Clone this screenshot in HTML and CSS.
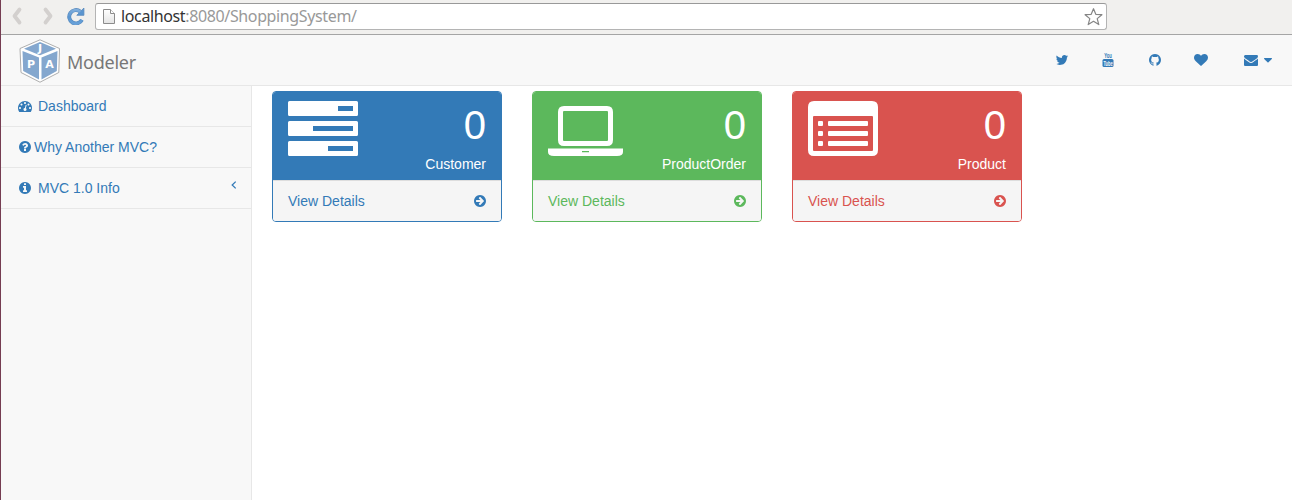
FILE: index.html
```
<!DOCTYPE html>
<html lang="en">
<head>
<meta charset="utf-8">
<title>ShoppingSystem</title>
<link rel="stylesheet" href="styles.css">
</head>
<body>
<svg class="defs" aria-hidden="true">
  <symbol id="arrow" viewBox="0 0 1792 1792"><path fill-rule="evenodd" d="M1664 896q0 209-103 385.500t-279.500 279.500-385.500 103-385.500-103-279.500-279.500-103-385.500 103-385.500 279.500-279.500 385.500-103 385.500 103 279.500 279.500 103 385.500zM1413 896q0-27-18-45l-453-453q-18-18-45-18t-45 18l-91 91q-18 18-18 45t18 45l189 189h-502q-26 0-45 19t-19 45v128q0 26 19 45t45 19h502l-189 189q-18 18-18 45t18 45l91 91q18 18 45 18t45-18l453-453q18-18 18-45z"/></symbol>
</svg>
<div class="window">
  <div class="toolbar">
    <svg class="nav-arrow back" width="14" height="20" viewBox="0 0 14 20"><path d="M9.500 3.500L4.500 10L9.500 16.500" /></svg>
    <svg class="nav-arrow forward" width="14" height="20" viewBox="0 0 14 20"><path d="M4.500 3.500L9.500 10L4.500 16.500"/></svg>
    <svg class="reload" width="18" height="18" viewBox="0 0 18 18">
      <defs><linearGradient id="reload" gradientUnits="userSpaceOnUse" x1="0" y1="0" x2="0" y2="18"><stop offset="0" stop-color="#8db6e0"/><stop offset=".55" stop-color="#5a95d0"/><stop offset="1" stop-color="#6ba3da"/></linearGradient></defs>
      <path d="M13.200 4.600A6.700 6.700 0 1 0 14.900 12.800" fill="none" stroke="#5688bc" stroke-width="3.900"/>
      <path d="M16.900 1V8.300H9.800Z" fill="#5a95d0" stroke="#5688bc" stroke-width=".8" stroke-linejoin="round"/>
      <path d="M13.400 4.800A6.700 6.700 0 1 0 14.900 12.800" fill="none" stroke="url(#reload)" stroke-width="2.800"/>
    </svg>
    <div class="address">
      <svg width="12" height="16" viewBox="0 0 12 16"><defs><linearGradient id="paper" x1="0" y1="0" x2="0" y2="1"><stop offset="0" stop-color="#fff"/><stop offset="1" stop-color="#e4e4e4"/></linearGradient></defs><path d="M.5.5H7.500L11.500 4.500V14.500H.5Z" fill="url(#paper)" stroke="#8c8c8c"/><path d="M7.500.5V4.500H11.500" fill="#fff" stroke="#8c8c8c"/></svg>
      <span class="url"><b>localhost</b>:8080/ShoppingSystem/</span>
      <svg class="star" width="20" height="20" viewBox="0 0 20 20"><path d="M9.500 1.700L11.800 7.300L17.900 7.700L13.200 11.600L14.800 17.600L9.500 14.300L4.200 17.600L5.800 11.600L1.100 7.700L7.200 7.300Z" fill="#fff" stroke="#858585" stroke-width="1.200" stroke-linejoin="round"/></svg>
    </div>
  </div>
  <header class="navbar">
    <a class="brand">
      <svg width="42" height="44" viewBox="0 0 42 44"><path d="M21 .8L40.500 9.500L39.800 33.500L21 43.200L2 33.500L1 9.500Z" fill="#fff" stroke="#999" stroke-width=".8"/><path d="M21 3L37 9.800L21 16.300L5 9.800Z" fill="#84a7ce"/><path d="M3.500 12L20 18.500V40.500L4.200 32Z" fill="#84a7ce"/><path d="M38.500 12L22.500 18.500V40.500L37.800 32Z" fill="#84a7ce"/><g class="cube-text"><text x="21" y="13">J</text><text x="12" y="29">P</text><text x="30.500" y="29">A</text></g></svg>
      <span>Modeler</span>
    </a>
    <nav class="links">
      <a><svg class="fa" viewBox="0 0 1792 1792"><path d="M1684 408q-67 98-162 167 1 14 1 42 0 130-38 259.500t-115.500 248.500-184.500 210.500-258 146-323 54.500q-271 0-496-145 35 4 78 4 225 0 401-138-105-2-188-64.500t-114-159.500q33 5 61 5 43 0 85-11-112-23-185.500-111.500t-73.500-205.500v-4q68 38 146 41-66-44-105-115t-39-154q0-88 44-163 121 149 294.500 238.500t371.500 99.500q-8-38-8-74 0-134 94.500-228.500t228.500-94.500q140 0 236 102 109-21 205-78-37 115-142 178 93-10 186-50z"/></svg></a>
      <a><svg class="fa youtube" viewBox="0 0 14 14"><rect x="1.500" y="6" width="11" height="8" rx="1.500"/><text x="3.200" y="5.200" textLength="7.600" lengthAdjust="spacingAndGlyphs">You</text><text class="tube" x="2.400" y="12.700" textLength="9.200" lengthAdjust="spacingAndGlyphs">Tube</text></svg></a>
      <a><svg class="fa" viewBox="0 0 1792 1792"><path d="M896 128q209 0 385.500 103t279.500 279.500 103 385.500q0 251-146.500 451.500t-378.500 277.500q-27 5-40-7t-13-30q0-3 .5-76.500t.5-134.500q0-97-52-142 57-6 102.500-18t94-39 81-66.500 53-105 20.500-150.500q0-119-79-206 37-91-8-204-28-9-81 11t-92 44l-38 24q-93-26-192-26t-192 26q-16-11-42.500-27t-83.500-38.500-85-13.500q-45 113-8 204-79 87-79 206 0 85 20.500 150t52.500 105 80.500 67 94 39 102.500 18q-39 36-49 103-21 10-45 15t-57 5-65.500-21.500-55.500-62.500q-19-32-48.500-52t-49.500-24l-20-3q-21 0-29 4.500t-5 11.500 9 14 13 12l7 5q22 10 43.500 38t31.500 51l10 23q13 38 44 61.500t67 30 69.500 7 55.500-3.500l23-4q0 38 .5 88.500t.5 54.500q0 18-13 30t-40 7q-232-77-378.500-277.500t-146.500-451.500q0-209 103-385.500t279.500-279.500 385.500-103z"/></svg></a>
      <a><svg class="fa" viewBox="0 0 1792 1792"><path d="M896 1664q-26 0-44-18l-624-602q-10-8-27.500-26t-55.500-65.500-68-97.500-53.500-121-23.500-138q0-220 127-344t351-124q62 0 126.500 21.500t120 58 95.500 68.500 76 68q36-36 76-68t95.500-68.500 120-58 126.500-21.500q224 0 351 124t127 344q0 221-229 450l-623 600q-18 18-44 18z"/></svg></a>
      <a class="mail"><svg class="fa" viewBox="0 0 1792 1792"><path d="M1792 710v794q0 66-47 113t-113 47h-1472q-66 0-113-47t-47-113v-794q44 49 101 87 362 246 497 345 57 42 92.500 65.500t94.500 48 110 24.500h2q51 0 110-24.500t94.500-48 92.500-65.500q170-123 498-345 57-39 100-87zm0-294q0 79-49 151t-122 123q-376 261-468 325-10 7-42.500 31t-54 38.500-52 32.500-57.500 27-50 9h-2q-23 0-50-9t-57.500-27-52-32.500-54-38.500-42.500-31q-91-64-262-182.500t-205-142.500q-62-42-117-115.500t-55-136.500q0-78 41.500-130t118.500-52h1472q65 0 112.500 47t47.500 113z"/></svg><svg width="8" height="5" viewBox="0 0 8 5"><path d="M.5 0H7.500Q8.300.3 7.800 1L4.500 4.300Q4 4.700 3.500 4.300L.2 1Q-.3.3.5 0Z"/></svg></a>
    </nav>
  </header>
  <div class="body">
    <aside class="sidebar">
      <a class="item"><svg class="fa" viewBox="0 0 1792 1792"><path d="M384 1152q0-53-37.500-90.500t-90.500-37.500-90.500 37.500-37.500 90.500 37.500 90.500 90.500 37.500 90.500-37.500 37.500-90.500zm192-448q0-53-37.500-90.500t-90.500-37.500-90.500 37.500-37.500 90.500 37.500 90.500 90.500 37.500 90.500-37.500 37.500-90.500zm428 481l101-382q6-26-7.500-48.500t-38.500-29.500-48 6.500-30 39.500l-101 382q-60 5-107 43.500t-63 98.500q-20 77 20 146t117 89 146-20 89-117q16-60-6-117t-72-91zm660-33q0-53-37.500-90.500t-90.500-37.500-90.500 37.500-37.500 90.500 37.500 90.500 90.500 37.500 90.500-37.500 37.500-90.500zm-640-640q0-53-37.500-90.500t-90.500-37.500-90.500 37.500-37.500 90.500 37.500 90.500 90.500 37.500 90.500-37.500 37.500-90.500zm448 192q0-53-37.500-90.500t-90.500-37.500-90.500 37.500-37.500 90.500 37.500 90.500 90.500 37.500 90.500-37.500 37.500-90.500zm320 448q0 261-141 483-19 29-54 29h-1402q-35 0-54-29-141-221-141-483 0-182 71-348t191-286 286-191 348-71 348 71 286 191 191 286 71 348z"/></svg><span>Dashboard</span></a>
      <a class="item tight"><svg class="fa" viewBox="0 0 1792 1792"><path d="M1024 1376v-192q0-14-9-23t-23-9h-192q-14 0-23 9t-9 23v192q0 14 9 23t23 9h192q14 0 23-9t9-23zm256-672q0-88-55.500-163t-138.500-116-170-41q-243 0-371 213-15 24 8 42l132 100q7 6 19 6 16 0 25-12 53-68 86-92 34-24 86-24 48 0 85.500 26t37.500 59q0 38-20 61t-68 45q-63 28-115.500 86.500t-52.500 125.500v36q0 14 9 23t23 9h192q14 0 23-9t9-23q0-19 21.500-49.500t54.500-49.500q32-18 49-28.500t46-35 44.500-48 28-60.500 12.500-81zm384 192q0 209-103 385.500t-279.500 279.500-385.500 103-385.500-103-279.500-279.500-103-385.500 103-385.500 279.500-279.500 385.500-103 385.500 103 279.500 279.500 103 385.500z"/></svg><span>Why Another MVC?</span></a>
      <a class="item"><svg class="fa" viewBox="0 0 1792 1792"><path d="M1152 1376v-160q0-14-9-23t-23-9h-96v-512q0-14-9-23t-23-9h-320q-14 0-23 9t-9 23v160q0 14 9 23t23 9h96v320h-96q-14 0-23 9t-9 23v160q0 14 9 23t23 9h448q14 0 23-9t9-23zm-128-896v-160q0-14-9-23t-23-9h-192q-14 0-23 9t-9 23v160q0 14 9 23t23 9h192q14 0 23-9t9-23zm640 416q0 209-103 385.500t-279.500 279.500-385.500 103-385.500-103-279.500-279.500-103-385.500 103-385.500 279.500-279.500 385.500-103 385.500 103 279.500 279.500 103 385.500z"/></svg><span>MVC 1.0 Info</span><svg class="chevron" width="6" height="8" viewBox="0 0 6 8"><path d="M4.700.6L1.200 4L4.700 7.400"/></svg></a>
    </aside>
    <main class="cards">
      <section class="card blue">
        <div class="head">
          <svg width="75" height="56" viewBox="0 0 75 56"><path fill-rule="evenodd" d="M1.500 0H68.500Q70 0 70 1.500V13.500Q70 15 68.500 15H1.500Q0 15 0 13.500V1.500Q0 0 1.500 0ZM50 5V10H65V5ZM1.500 20H68.500Q70 20 70 21.500V33.500Q70 35 68.500 35H1.500Q0 35 0 33.500V21.500Q0 20 1.500 20ZM25 25V30H65V25ZM1.500 40H68.500Q70 40 70 41.500V53.500Q70 55 68.500 55H1.500Q0 55 0 53.500V41.500Q0 40 1.500 40ZM40 45V50H65V45Z"/></svg>
          <div class="stat"><div class="count">0</div><div>Customer</div></div>
        </div>
        <a class="foot"><span>View Details</span><svg class="fa"><use href="#arrow"/></svg></a>
      </section>
      <section class="card green">
        <div class="head">
          <svg width="75" height="56" viewBox="0 0 75 56"><path fill-rule="evenodd" d="M16 5H59Q65 5 65 11V39Q65 45 59 45H16Q10 45 10 39V11Q10 5 16 5ZM16 10Q15 10 15 11V39Q15 40 16 40H59Q60 40 60 39V11Q60 10 59 10ZM0 47.500H75V51Q75 55 69 55H6Q0 55 0 51ZM34 50V51.200H41V50Z"/></svg>
          <div class="stat"><div class="count">0</div><div>ProductOrder</div></div>
        </div>
        <a class="foot"><span>View Details</span><svg class="fa"><use href="#arrow"/></svg></a>
      </section>
      <section class="card red">
        <div class="head">
          <svg width="75" height="56" viewBox="0 0 75 56"><path fill-rule="evenodd" d="M6 0H64Q70 0 70 6V49Q70 55 64 55H6Q0 55 0 49V6Q0 0 6 0ZM6 15Q5 15 5 16V49Q5 50 6 50H64Q65 50 65 49V16Q65 15 64 15Z"/><g><rect x="10" y="20" width="5" height="5" rx="1"/><rect x="20" y="20" width="40" height="5" rx="1"/><rect x="10" y="30" width="5" height="5" rx="1"/><rect x="20" y="30" width="40" height="5" rx="1"/><rect x="10" y="40" width="5" height="5" rx="1"/><rect x="20" y="40" width="40" height="5" rx="1"/></g></svg>
          <div class="stat"><div class="count">0</div><div>Product</div></div>
        </div>
        <a class="foot"><span>View Details</span><svg class="fa"><use href="#arrow"/></svg></a>
      </section>
    </main>
  </div>
</div>
</body>
</html>
```
FILE: styles.css
```
* { box-sizing: border-box; }
body {
  margin: 0;
  background: #fff;
  font: 14px/20px "Liberation Sans", Arial, sans-serif;
  color: #337ab7;
  overflow: hidden;
}
svg { display: block; flex: none; fill: currentColor; }
.defs { display: none; }
.fa { width: 14px; height: 14px; }
.window {
  height: 500px;
  border-left: 1px solid #753d52;
  display: flex;
  flex-direction: column;
}
.toolbar {
  height: 35px;
  flex: none;
  display: flex;
  align-items: flex-start;
  background: #f1f0ee;
  border-bottom: 1px solid #a5a5a5;
  padding: 3px 0 0 9px;
}
.nav-arrow { margin-top: 3px; }
.nav-arrow path { fill: none; stroke: #d3d0ce; stroke-width: 3.800; stroke-linecap: round; stroke-linejoin: round; }
.forward { margin-left: 17px; }
.reload { margin: 4px 0 0 12px; }
.address {
  width: 1012px;
  height: 27px;
  margin-left: 10px;
  display: flex;
  align-items: center;
  background: #fff;
  border: 1px solid #b4b4b4;
  border-top-color: #999;
  border-radius: 3px;
  padding: 0 2px 0 7px;
}
.url {
  margin: -1px 0 0 6px;
  font: 16px/24px "Noto Sans", sans-serif;
  letter-spacing: -.37px;
  color: #999;
}
.url b { font-weight: 400; color: #333; }
.star { margin-left: auto; }
.navbar {
  height: 51px;
  flex: none;
  display: flex;
  justify-content: space-between;
  background: #f8f8f8;
  border-bottom: 1px solid #e7e7e7;
}
.brand {
  display: flex;
  padding: 4px 0 0 18px;
  color: #777;
  font: 18px/46px "Noto Sans", sans-serif;
  letter-spacing: -.25px;
  gap: 6px;
}
.cube-text { fill: #fff; font: bold 11px "DejaVu Sans", sans-serif; text-anchor: middle; }
.links { display: flex; gap: 32.300px; padding: 18px 20px 0 0; }
.mail { display: flex; gap: 6px; margin-left: 3.700px; }
.mail svg + svg { margin-top: 5px; }
.youtube { font: bold 7px "Liberation Sans", sans-serif; letter-spacing: 0; overflow: visible; }
.tube { fill: #f8f8f8; font-size: 7px; }
.body { display: flex; flex: 1; }
.sidebar {
  width: 251px;
  background: #f8f8f8;
  border-right: 1px solid #e7e7e7;
}
.item {
  height: 41px;
  display: flex;
  align-items: center;
  padding: 0 14px 0 17px;
  gap: 6px;
  border-bottom: 1px solid #e7e7e7;
}
.tight { gap: 2px; }
.chevron { margin: -6px 0 0 auto; }
.chevron path { fill: none; stroke: currentColor; stroke-width: 1.300; }
.cards { display: flex; gap: 30px; padding: 5px 0 0 20px; }
.card {
  width: 230px;
  height: 131px;
  border: 1px solid currentColor;
  border-radius: 4px;
  overflow: hidden;
}
.blue { color: #337ab7; }
.green { color: #5cb85c; }
.red { color: #d9534f; }
.head {
  height: 88px;
  display: flex;
  justify-content: space-between;
  padding: 9px 15px 0;
  background: currentColor;
}
.head svg { fill: #fff; }
.stat { color: #fff; text-align: right; padding-top: 4px; }
.count { font-size: 40px; line-height: 40px; margin-bottom: 9px; }
.foot {
  height: 41px;
  display: flex;
  align-items: center;
  justify-content: space-between;
  padding: 0 14px 0 15px;
  background: #f5f5f5;
  border-top: 1px solid #ddd;
}
```
